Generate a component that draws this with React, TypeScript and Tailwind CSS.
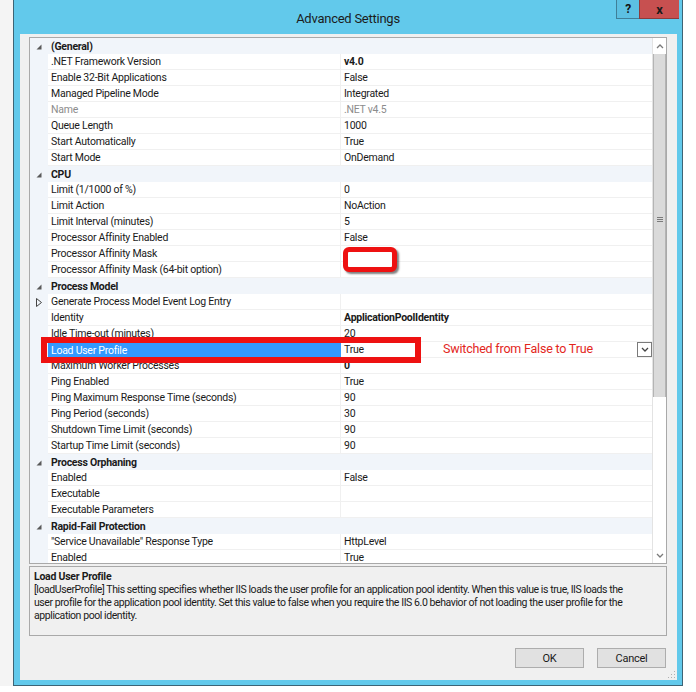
/**
 * IIS "Advanced Settings" dialog for an application pool, with the
 * "Load User Profile" row selected and annotated in red.
 */

type Row = {
  name: string;
  value?: string;
  cat?: boolean;
  bold?: boolean;
  muted?: boolean;
  expand?: boolean;
  selected?: boolean;
};

const ROWS: Row[] = [
  { name: '(General)', cat: true },
  { name: '.NET Framework Version', value: 'v4.0', bold: true },
  { name: 'Enable 32-Bit Applications', value: 'False' },
  { name: 'Managed Pipeline Mode', value: 'Integrated' },
  { name: 'Name', value: '.NET v4.5', muted: true },
  { name: 'Queue Length', value: '1000' },
  { name: 'Start Automatically', value: 'True' },
  { name: 'Start Mode', value: 'OnDemand' },
  { name: 'CPU', cat: true },
  { name: 'Limit (1/1000 of %)', value: '0' },
  { name: 'Limit Action', value: 'NoAction' },
  { name: 'Limit Interval (minutes)', value: '5' },
  { name: 'Processor Affinity Enabled', value: 'False' },
  { name: 'Processor Affinity Mask', value: '' },
  { name: 'Processor Affinity Mask (64-bit option)', value: '' },
  { name: 'Process Model', cat: true },
  { name: 'Generate Process Model Event Log Entry', value: '', expand: true },
  { name: 'Identity', value: 'ApplicationPoolIdentity', bold: true },
  { name: 'Idle Time-out (minutes)', value: '20' },
  { name: 'Load User Profile', value: 'True', selected: true },
  { name: 'Maximum Worker Processes', value: '0', bold: true },
  { name: 'Ping Enabled', value: 'True' },
  { name: 'Ping Maximum Response Time (seconds)', value: '90' },
  { name: 'Ping Period (seconds)', value: '30' },
  { name: 'Shutdown Time Limit (seconds)', value: '90' },
  { name: 'Startup Time Limit (seconds)', value: '90' },
  { name: 'Process Orphaning', cat: true },
  { name: 'Enabled', value: 'False' },
  { name: 'Executable', value: '' },
  { name: 'Executable Parameters', value: '' },
  { name: 'Rapid-Fail Protection', cat: true },
  { name: '"Service Unavailable" Response Type', value: 'HttpLevel' },
  { name: 'Enabled', value: 'True' },
];

/* ------------------------------------------------------------------ */
/* Small glyphs                                                        */
/* ------------------------------------------------------------------ */

function CollapseGlyph() {
  return (
    <svg width="6" height="6" viewBox="0 0 6 6">
      <polygon points="5.5,0.5 5.5,5.5 0.5,5.5" fill="#5a5a5a" />
    </svg>
  );
}

function ExpandGlyph() {
  return (
    <svg width="6" height="9" viewBox="0 0 6 9">
      <polygon points="0.5,0.5 5.5,4.5 0.5,8.5" fill="none" stroke="#444" strokeWidth="1" />
    </svg>
  );
}

function Chevron({ down = false, color = '#7a7a7a' }: { down?: boolean; color?: string }) {
  return (
    <svg width="8" height="5" viewBox="0 0 8 5">
      <polyline
        points={down ? '1,1 4,4 7,1' : '1,4 4,1 7,4'}
        fill="none"
        stroke={color}
        strokeWidth="1.3"
      />
    </svg>
  );
}

/* ------------------------------------------------------------------ */
/* Grid rows                                                           */
/* ------------------------------------------------------------------ */

function GridRow({ row }: { row: Row }) {
  if (row.cat) {
    return (
      <div className="flex h-4 shrink-0 items-center bg-[#f1f5fa] pt-[2px]">
        <div className="flex w-[18px] justify-center">
          <CollapseGlyph />
        </div>
        <span className="pl-[3px] font-bold text-[#1a1a1a]">{row.name}</span>
      </div>
    );
  }

  const text = row.muted ? 'text-[#8c8c8c]' : 'text-[#1a1a1a]';

  return (
    <div className="flex h-4 shrink-0">
      <div className="flex w-[18px] items-center justify-center bg-[#f1f5fa] pt-px">
        {row.expand && <ExpandGlyph />}
      </div>
      <div
        className={
          row.selected
            ? 'flex w-[293px] items-center bg-[#3399ff] pl-[3px] pt-[2px] text-white'
            : `flex w-[293px] items-center border-b border-r border-[#f0f0f0] pl-[3px] pt-[2px] ${text}`
        }
      >
        {row.name}
      </div>
      <div
        className={`flex flex-1 items-center border-b border-[#f0f0f0] pl-[3px] ${text} ${
          row.bold ? 'font-bold' : ''
        }`}
      >
        <span className="pt-[2px]">{row.value}</span>
        {row.selected && (
          <div className="ml-auto flex h-[15px] w-[15px] items-center justify-center border border-[#7a7a7a] bg-white">
            <Chevron down color="#444" />
          </div>
        )}
      </div>
    </div>
  );
}

/* ------------------------------------------------------------------ */
/* Scrollbar                                                           */
/* ------------------------------------------------------------------ */

function Scrollbar() {
  return (
    <div className="flex w-[14px] flex-col border-l border-[#e3e3e3] bg-white">
      <div className="flex h-[16px] items-center justify-center">
        <Chevron />
      </div>
      <div className="flex h-[343px] items-center justify-center border-x border-[#b4b4b4] bg-[#dadada]">
        <div className="mb-[12px] flex flex-col gap-[1px]">
          <div className="h-px w-[6px] bg-[#7a7a7a]" />
          <div className="h-px w-[6px] bg-[#7a7a7a]" />
          <div className="h-px w-[6px] bg-[#7a7a7a]" />
        </div>
      </div>
      <div className="flex-1" />
      <div className="flex h-[16px] items-center justify-center">
        <Chevron down />
      </div>
    </div>
  );
}

/* ------------------------------------------------------------------ */
/* Dialog                                                              */
/* ------------------------------------------------------------------ */

export default function App() {
  return (
    <div className="flex h-[692px] w-[696px] bg-white font-[Roboto,'Liberation_Sans',sans-serif] text-[10.5px] leading-none tracking-[-0.25px]">
      <div className="h-[686px] w-[13px] bg-[#f4f4f4]" />

      {/* Window frame */}
      <div className="flex h-[686px] w-[670px] shrink-0 flex-col border border-t-0 border-[#3d6475] bg-[#62c9eb]">
        {/* Title bar */}
        <div className="relative flex h-[34px] shrink-0 items-center justify-center pt-[3px]">
          <span className="text-[13px] text-[#1c1c1c]">Advanced Settings</span>
          <div className="absolute right-[3px] top-0 flex">
            <div className="flex h-[19px] w-[23px] items-center justify-center border-b border-l border-[#3f7f98] bg-[#5cc0e2] text-[12px] font-bold text-[#111]">
              ?
            </div>
            <div className="flex h-[19px] w-[40px] items-center justify-center border-b border-l border-[#8c3b3b] bg-[#c75050] text-[13px] font-bold text-[#1a1a1a]">
              x
            </div>
          </div>
        </div>

        {/* Client area */}
        <div className="ml-[6px] mr-[5px] flex h-[646px] flex-col bg-[#f0f0f0]">
          {/* Property grid */}
          <div className="relative ml-[9px] mr-[10px] mt-[3px] flex h-[527px] border border-[#a9a9a9] bg-white">
            <div className="flex flex-1 flex-col overflow-hidden">
              {ROWS.map((row, i) => (
                <GridRow key={i} row={row} />
              ))}
            </div>
            <Scrollbar />

            {/* Annotations */}
            <div className="absolute left-[313px] top-[209px] h-[25px] w-[54px] rounded-[6px] border-[5px] border-[#ee1111] bg-white shadow-[2px_2px_2px_rgba(0,0,0,0.5)]" />
            <div className="absolute left-[11px] top-[299px] h-[26px] w-[380px] border-[6px] border-[#ee1111]" />
            <span className="absolute left-[413px] top-[305px] text-[12.5px] tracking-[-0.2px] text-[#e3261c]">
              Switched from False to True
            </span>
          </div>

          {/* Description */}
          <div className="ml-[9px] mr-[10px] mt-[2px] h-[70px] border border-[#a9a9a9] px-[4px] pt-[3px] leading-[13px] text-[#1a1a1a]">
            <div className="font-bold">Load User Profile</div>
            <div className="whitespace-nowrap tracking-[-0.42px]">
              [loadUserProfile] This setting specifies whether IIS loads the user profile for an application pool identity. When this value is true, IIS loads the
            </div>
            <div className="whitespace-nowrap tracking-[-0.42px]">
              user profile for the application pool identity. Set this value to false when you require the IIS 6.0 behavior of not loading the user profile for the
            </div>
            <div className="whitespace-nowrap tracking-[-0.42px]">application pool identity.</div>
          </div>

          {/* Buttons */}
          <div className="mr-[11px] mt-[12px] flex justify-end gap-[13px]">
            <button
              type="button"
              className="flex h-[20px] w-[69px] items-center justify-center border border-[#adadad] bg-[#e1e1e1] text-[11px] text-[#1a1a1a]"
            >
              OK
            </button>
            <button
              type="button"
              className="flex h-[20px] w-[69px] items-center justify-center border border-[#adadad] bg-[#e1e1e1] text-[11px] text-[#1a1a1a]"
            >
              Cancel
            </button>
          </div>

          {/* Size grip */}
          <div className="mr-[1px] mt-auto flex justify-end pb-[1px]">
            <svg width="8" height="8" viewBox="0 0 8 8">
              <rect x="6" y="0" width="1" height="1" fill="#b0b0b0" />
              <rect x="3" y="3" width="1" height="1" fill="#b0b0b0" />
              <rect x="6" y="3" width="1" height="1" fill="#b0b0b0" />
              <rect x="0" y="6" width="1" height="1" fill="#b0b0b0" />
              <rect x="3" y="6" width="1" height="1" fill="#b0b0b0" />
              <rect x="6" y="6" width="1" height="1" fill="#b0b0b0" />
            </svg>
          </div>
        </div>
      </div>
    </div>
  );
}
